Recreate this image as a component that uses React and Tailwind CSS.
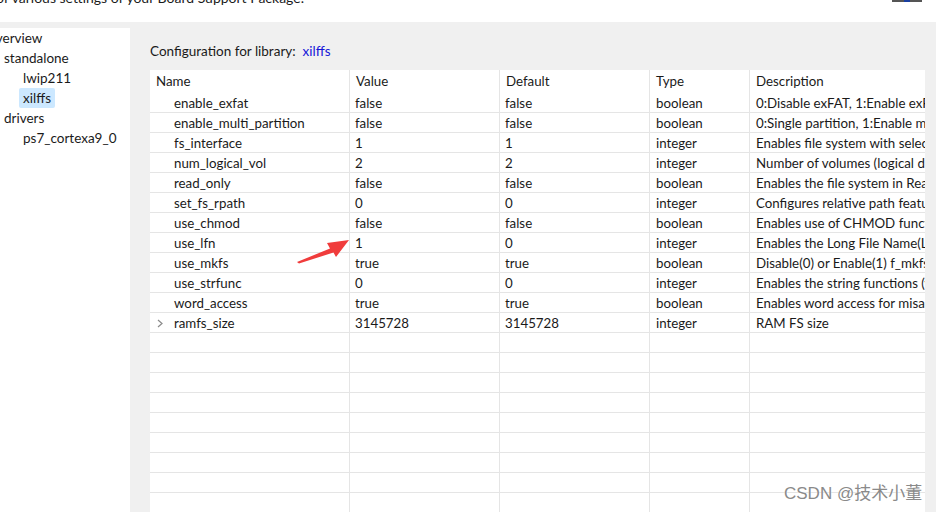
import React from "react";

const rows = [
  ["enable_exfat", "false", "false", "boolean", "0:Disable exFAT, 1:Enable exFAT"],
  ["enable_multi_partition", "false", "false", "boolean", "0:Single partition, 1:Enable multi partition"],
  ["fs_interface", "1", "1", "integer", "Enables file system with selected interface"],
  ["num_logical_vol", "2", "2", "integer", "Number of volumes (logical drives)"],
  ["read_only", "false", "false", "boolean", "Enables the file system in Read_Only mode"],
  ["set_fs_rpath", "0", "0", "integer", "Configures relative path feature"],
  ["use_chmod", "false", "false", "boolean", "Enables use of CHMOD functionality"],
  ["use_lfn", "1", "0", "integer", "Enables the Long File Name(LFN) support"],
  ["use_mkfs", "true", "true", "boolean", "Disable(0) or Enable(1) f_mkfs function"],
  ["use_strfunc", "0", "0", "integer", "Enables the string functions (valid values 0 to 2)"],
  ["word_access", "true", "true", "boolean", "Enables word access for misaligned memory access platform"],
  ["ramfs_size", "3145728", "3145728", "integer", "RAM FS size", true],
];

const font = { fontFamily: 'Lato, "Noto Sans", Arial, sans-serif' };

function Row({ r }) {
  return (
    <div className="grid grid-cols-[199px_150px_150px_100px_176px] h-[20px] border-b border-[#e5e5e5] text-[13.3px] leading-[21px] text-[#1a1a1a] whitespace-nowrap">
      <div className="relative pl-[24px] overflow-hidden">
        {r && r[5] && (
          <svg className="absolute left-[7px] top-[6px]" width="6" height="9" viewBox="0 0 6 9">
            <path d="M1 1 L5 4.5 L1 8" fill="none" stroke="#8a8a8a" strokeWidth="1.2" />
          </svg>
        )}
        {r ? r[0] : ""}
      </div>
      <div className="border-l border-[#e5e5e5] pl-[5px] overflow-hidden">{r ? r[1] : ""}</div>
      <div className="border-l border-[#e5e5e5] pl-[5px] overflow-hidden">{r ? r[2] : ""}</div>
      <div className="border-l border-[#e5e5e5] pl-[6px] overflow-hidden">{r ? r[3] : ""}</div>
      <div className="border-l border-[#e5e5e5] pl-[6px] overflow-hidden">{r ? r[4] : ""}</div>
    </div>
  );
}

export default function App() {
  return (
    <div className="relative w-[936px] h-[512px] overflow-hidden bg-[#f0f0f0]" style={font}>
      {/* top strip */}
      <div className="h-[22px] bg-white relative overflow-hidden">
        <div className="absolute left-[-4px] top-[-13px] text-[14px] text-[#1a1a1a] whitespace-nowrap">
          of various settings of your Board Support Package.
        </div>
        <div className="absolute left-[892px] top-0 w-[30px] h-[2px] bg-[#555]">
          <div className="ml-[12px] w-[6px] h-[2px] bg-[#1a3fa0]" />
        </div>
      </div>
      <div className="flex h-[490px]">
        {/* left tree */}
        <div className="w-[130px] mt-[6px] bg-white text-[13.5px] text-[#1a1a1a] leading-[20px] overflow-hidden whitespace-nowrap">
          <div>
            <div className="ml-[-15px] h-[20px]">Overview</div>
            <div className="pl-[4px] h-[20px]">standalone</div>
            <div className="pl-[23px] h-[20px]">lwip211</div>
            <div className="h-[20px] flex">
              <span className="ml-[19px] px-[4px] bg-[#cce8ff] rounded-[2px]">xilffs</span>
            </div>
            <div className="pl-[4px] h-[20px]">drivers</div>
            <div className="pl-[23px] h-[20px]">ps7_cortexa9_0</div>
          </div>
        </div>
        {/* right */}
        <div className="flex-1 pl-[20px] pr-[11px] overflow-hidden">
          <div className="h-[48px] pt-[19px] text-[13.5px] text-[#1a1a1a] leading-[20px] whitespace-nowrap">
            Configuration for library:&nbsp;&nbsp;<span className="text-[#1515d8]">xilffs</span>
          </div>
          <div className="bg-white h-[500px] overflow-hidden">
            <div className="grid grid-cols-[199px_150px_150px_100px_176px] h-[23px] text-[13.3px] leading-[23px] text-[#1a1a1a] whitespace-nowrap">
              <div className="pl-[6px]">Name</div>
              <div className="border-l border-[#e5e5e5] pl-[6px]">Value</div>
              <div className="border-l border-[#e5e5e5] pl-[6px]">Default</div>
              <div className="border-l border-[#e5e5e5] pl-[6px]">Type</div>
              <div className="border-l border-[#e5e5e5] pl-[6px]">Description</div>
            </div>
            {rows.map((r, i) => (
              <Row key={i} r={r} />
            ))}
            {Array.from({ length: 10 }).map((_, i) => (
              <Row key={"e" + i} r={null} />
            ))}
          </div>
        </div>
      </div>
      {/* red arrow annotation */}
      <svg className="absolute left-[294px] top-[234px]" width="60" height="32" viewBox="0 0 60 32">
        <path d="M3 28 L36 14.5 L33 9 L55 6 L42 23 L39.5 18.5 L5 29.5 Z" fill="#f03c3c" />
      </svg>
      {/* watermark */}
      <div
        className="absolute left-[784px] top-[481px] text-[17px] text-[#8a8a8a] whitespace-nowrap"
        style={{ fontFamily: '"Liberation Sans", "Noto Sans CJK SC", sans-serif', textShadow: "0 0 2px #fff" }}
      >
        CSDN @技术小董
      </div>
    </div>
  );
}
